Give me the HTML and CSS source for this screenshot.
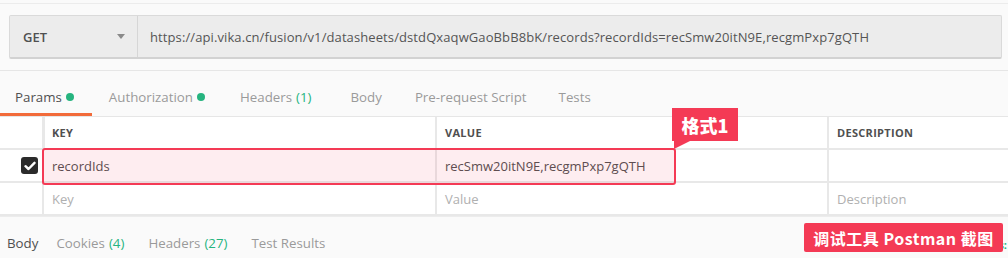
FILE: index.html
```html
<!DOCTYPE html>
<html lang="en">
<head>
    <meta charset="UTF-8">
    <title>Postman request</title>
    <link rel="stylesheet" href="styles.css">
</head>
<body>
<section class="request">
    <div class="url-bar">
        <div class="method">GET <span class="caret"></span></div>
        <div class="url">https://api.vika.cn/fusion/v1/datasheets/dstdQxaqwGaoBbB8bK/records?recordIds=recSmw20itN9E,recgmPxp7gQTH</div>
    </div>
</section>

<nav class="tabs">
    <a class="tab active">Params <i class="dot"></i></a>
    <a class="tab">Authorization <i class="dot"></i></a>
    <a class="tab">Headers <span class="count">(1)</span></a>
    <a class="tab">Body</a>
    <a class="tab">Pre-request Script</a>
    <a class="tab">Tests</a>
</nav>

<div class="params">
    <div class="row head">
        <div class="cell check"></div>
        <div class="cell">KEY</div>
        <div class="cell">VALUE</div>
        <div class="cell">DESCRIPTION</div>
    </div>
    <div class="row">
        <div class="cell check"><span class="box">
            <svg width="12" height="10" viewBox="0 0 12 10"><path d="M1.5 5.2 L4.5 8 L10.5 1.8" fill="none" stroke="#fff" stroke-width="2.4" stroke-linecap="round" stroke-linejoin="round"/></svg>
        </span></div>
        <div class="cell">recordIds</div>
        <div class="cell">recSmw20itN9E,recgmPxp7gQTH</div>
        <div class="cell"></div>
    </div>
    <div class="row">
        <div class="cell check"></div>
        <div class="cell hint">Key</div>
        <div class="cell hint">Value</div>
        <div class="cell hint">Description</div>
    </div>

    <!-- annotation over the first row -->
    <div class="mark"></div>
    <div class="label">格式1<span class="tail"></span></div>
</div>

<nav class="results">
    <a class="tab active">Body</a>
    <a class="tab">Cookies <span class="count">(4)</span></a>
    <a class="tab">Headers <span class="count">(27)</span></a>
    <a class="tab">Test Results</a>
    <span class="status">Status:</span>
    <div class="badge">调试工具 Postman 截图</div>
</nav>
</body>
</html>
```

FILE: styles.css
```css
* {
    padding: 0;
    margin: 0;
    box-sizing: border-box;
}
body {
    font-family: "Open Sans", "Noto Sans CJK SC", sans-serif;
    font-size: 13px;
    color: #505050;
    background-color: #fafafa;
    width: 1008px;
    height: 258px;
    overflow: hidden;
}
.request {
    margin-top: 3px;
    border-top: 1px solid #ececec;
    border-bottom: 1px solid #e6e6e6;
    padding: 11px 6px 11px 9px;
}
.url-bar {
    display: flex;
    height: 44px;
    background-color: #ececec;
    border: 1px solid #dadada;
    border-bottom: 2px solid #d2d2d2;
    border-radius: 2px;
}
.method {
    width: 128px;
    border-right: 1px solid #d6d6d6;
    display: flex;
    align-items: center;
    justify-content: space-between;
    padding: 0 12px 0 13px;
    font-weight: 600;
    color: #505050;
}
.caret {
    border-left: 4px solid transparent;
    border-right: 4px solid transparent;
    border-top: 5px solid #8a8a8a;
}
.url {
    display: flex;
    align-items: center;
    padding-left: 12px;
    color: #555;
    letter-spacing: 0.1px;
    white-space: nowrap;
}
.tabs {
    display: flex;
    height: 45px;
    font-size: 13.3px;
}
.tab {
    display: flex;
    align-items: center;
    height: 45px;
    padding: 10px 17px 0 17px;
    color: #9a9a9a;
    border-bottom: 3px solid transparent;
    white-space: nowrap;
}
.tab.active {
    color: #505050;
    border-bottom-color: #f26b3a;
}
.count {
    color: #26b47f;
    margin-left: 4px;
}
.dot {
    width: 8px;
    height: 8px;
    border-radius: 50%;
    background-color: #26b47f;
    margin-left: 4px;
}
.tabs .tab:nth-child(1) { padding-left: 15px; padding-right: 18px; }
.tabs .tab:nth-child(2) { padding-right: 18px; }
.tabs .tab:nth-child(3) { padding-right: 22px; }
.tabs .tab:nth-child(4) { padding-right: 16px; }
.tabs .tab:nth-child(5) { padding-right: 15px; }
.params {
    position: relative;
    background-color: #fff;
    border-top: 1px solid #e6e6e6;
}
.row {
    display: grid;
    grid-template-columns: 42px 393px 392px 1fr;
    height: 33px;
    border-bottom: 2px solid #e8e8e8;
}
.row.head {
    font-size: 11px;
    font-weight: 700;
    letter-spacing: 0.3px;
}
.cell {
    display: flex;
    align-items: center;
    padding-left: 8px;
    border-left: 2px solid #e8e8e8;
    white-space: nowrap;
}
.cell.check {
    border-left: none;
    justify-content: flex-end;
    padding-right: 4px;
}
.head .cell:nth-child(2) { border-left-width: 3px; padding-left: 7px; }
.hint {
    color: #b0b0b0;
}
.box {
    width: 17px;
    height: 17px;
    background-color: #2b2b2b;
    border-radius: 3px;
    display: flex;
    align-items: center;
    justify-content: center;
}
.mark {
    position: absolute;
    left: 42px;
    top: 31px;
    width: 634px;
    height: 37px;
    border: 2px solid #f43a55;
    border-radius: 3px;
    background-color: rgba(244, 58, 85, 0.09);
}
.label {
    position: absolute;
    left: 672px;
    top: -9px;
    width: 66px;
    height: 33px;
    background-color: #f43a55;
    color: #fff;
    font-family: "Noto Sans CJK SC", sans-serif;
    font-size: 18px;
    font-weight: 900;
    display: flex;
    align-items: center;
    justify-content: center;
}
.tail {
    position: absolute;
    left: 2px;
    top: 33px;
    width: 0;
    height: 0;
    border-top: 8px solid #f43a55;
    border-right: 16px solid transparent;
}
.results {
    position: relative;
    display: flex;
    height: 43px;
    border-top: 1px solid #ececec;
    padding-left: 7px;
    font-size: 13.3px;
}
.results .tab {
    height: 43px;
    padding: 9px 0 0 0;
    border-bottom: none;
    margin-right: 24px;
}
.results .tab:nth-child(1) { margin-right: 18px; }
.results .tab:nth-child(2) { margin-right: 24px; }
.status {
    position: absolute;
    right: 1px;
    top: 20px;
    font-size: 11px;
    font-weight: 700;
    color: #26b47f;
}
.badge {
    position: absolute;
    left: 804px;
    top: 6px;
    width: 199px;
    height: 29px;
    background-color: #f43a55;
    border-radius: 2px;
    color: #fff;
    font-family: "Noto Sans CJK SC", sans-serif;
    font-size: 16px;
    font-weight: 700;
    letter-spacing: 0.5px;
    display: flex;
    align-items: center;
    justify-content: center;
}
```
